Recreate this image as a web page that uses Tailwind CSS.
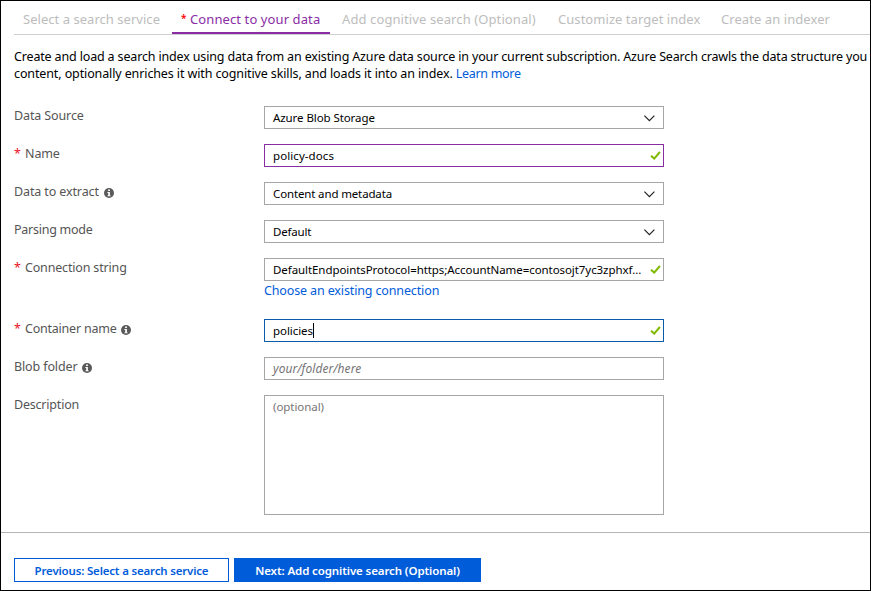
<!DOCTYPE html>
<html lang="en">
<head>
<meta charset="utf-8">
<title>Import data</title>
<script src="https://cdn.jsdelivr.net/npm/@tailwindcss/browser@4"></script>
</head>
<body class="bg-white font-['Noto_Sans','Open_Sans',sans-serif]">
<svg class="hidden">
  <symbol id="chevron" viewBox="0 0 12 8"><path d="M1.4 1.6 6.4 6.6 11.4 1.6" fill="none" stroke="#222" stroke-width="1.2"/></symbol>
  <symbol id="check" viewBox="0 0 11 9"><path d="M1 4.7 4.2 7.6 9.9 1" fill="none" stroke="#7fba00" stroke-width="2"/></symbol>
  <symbol id="info" viewBox="0 0 10 10"><circle cx="5" cy="5" r="5" fill="#5a5a5a"/><path d="M4.1 1.6h1.8v1.5H4.1zM3.4 4h2.5v3.4h.8v.9H3.4v-.9h.8V4.9h-.8z" fill="#fff"/></symbol>
</svg>
<div class="flex h-[591px] w-[871px] flex-col overflow-hidden border border-black">
  <nav class="ml-[13px] flex h-[34px] shrink-0 whitespace-nowrap border-b border-[#cfcfcf] pt-[9px] text-[13px] leading-[18px] text-[#bdbdbd]">
    <div class="w-[158px] pl-[9px] tracking-[0.034px]">Select a search service</div>
    <div class="flex h-[24px] w-[158px] border-b-2 border-[#8a2da5] pl-[9px] text-[#8a2da5]"><span class="w-[9px] text-[10px] leading-[16px] font-semibold text-[#f00]">*</span><span class="tracking-[0.1px]">Connect to your data</span></div>
    <div class="w-[216px] pl-[12px] tracking-[0.1px]">Add cognitive search (Optional)</div>
    <div class="w-[164px] pl-[12px] tracking-[0.05px]">Customize target index</div>
    <div class="pl-[11px] tracking-[0.068px]">Create an indexer</div>
  </nav>

  <p class="mt-[13px] ml-[13px] shrink-0 whitespace-nowrap text-[12.5px] leading-[17px] text-black"><span class="tracking-[-0.155px]">Create and load a search index using data from an existing Azure data source in your current subscription. Azure Search crawls the data structure you</span><br><span class="tracking-[-0.118px]">content, optionally enriches it with cognitive skills, and loads it into an index. </span><a class="tracking-[-0.31px] text-[#015cda]">Learn more</a></p>

  <form class="mt-[24px] ml-[13px] flex w-[650px] shrink-0 flex-col whitespace-nowrap text-[11.5px] leading-[22px] text-black">
    <div class="flex h-[38px] items-start">
      <label class="w-[250px] pt-px text-[12.5px] leading-[18px] tracking-[-0.12px] text-[#555]">Data Source</label>
      <div class="flex h-[23px] w-[400px] items-center justify-between border border-[#a6a6a6] pr-[8px] pl-[8px]"><span class="tracking-[-0.08px]">Azure Blob Storage</span><svg class="mt-px h-[8px] w-[12px]"><use href="#chevron"/></svg></div>
    </div>
    <div class="flex h-[38px] items-start">
      <label class="flex w-[250px] pt-px text-[12.5px] leading-[18px] tracking-[-0.12px] text-[#555]"><span class="w-[11px] text-[#e81123]">*</span>Name</label>
      <div class="flex h-[23px] w-[400px] items-center justify-between border border-[#8a2da5] pr-[2px] pl-[8px]"><span class="tracking-[0.08px]">policy-docs</span><svg class="h-[9px] w-[11px]"><use href="#check"/></svg></div>
    </div>
    <div class="flex h-[38px] items-start">
      <label class="flex w-[250px] items-center gap-[5px] pt-px text-[12.5px] leading-[18px] tracking-[-0.12px] text-[#555]">Data to extract<svg class="mt-px h-[10px] w-[10px]"><use href="#info"/></svg></label>
      <div class="flex h-[23px] w-[400px] items-center justify-between border border-[#a6a6a6] pr-[8px] pl-[8px]"><span class="tracking-[-0.14px]">Content and metadata</span><svg class="mt-px h-[8px] w-[12px]"><use href="#chevron"/></svg></div>
    </div>
    <div class="flex h-[38px] items-start">
      <label class="w-[250px] pt-px text-[12.5px] leading-[18px] tracking-[-0.25px] text-[#555]">Parsing mode</label>
      <div class="flex h-[23px] w-[400px] items-center justify-between border border-[#a6a6a6] pr-[8px] pl-[8px]"><span class="tracking-[-0.18px]">Default</span><svg class="mt-px h-[8px] w-[12px]"><use href="#chevron"/></svg></div>
    </div>
    <div class="flex h-[61px] items-start">
      <label class="flex w-[250px] pt-px text-[12.5px] leading-[18px] tracking-[-0.17px] text-[#555]"><span class="w-[11px] text-[#e81123]">*</span>Connection string</label>
      <div class="w-[400px]">
        <div class="flex h-[23px] items-center justify-between border border-[#a6a6a6] pr-[2px] pl-[8px]"><span class="tracking-[-0.07px]">DefaultEndpointsProtocol=https;AccountName=contosojt7yc3zphxf...</span><svg class="h-[9px] w-[11px]"><use href="#check"/></svg></div>
        <a class="block pt-px text-[12.5px] leading-[18px] tracking-[-0.135px] text-[#015cda]">Choose an existing connection</a>
      </div>
    </div>
    <div class="flex h-[38px] items-start">
      <label class="flex w-[250px] items-center pt-px text-[12.5px] leading-[18px] tracking-[-0.22px] text-[#555]"><span class="w-[11px] text-[#e81123]">*</span>Container name<svg class="mt-px ml-[4px] h-[10px] w-[10px]"><use href="#info"/></svg></label>
      <div class="flex h-[23px] w-[400px] items-center justify-between border border-[#0a5ca8] pr-[2px] pl-[8px]"><span class="flex items-center"><span class="tracking-[-0.06px]">policies</span><span class="h-[15px] w-px bg-black"></span></span><svg class="h-[9px] w-[11px]"><use href="#check"/></svg></div>
    </div>
    <div class="flex h-[38px] items-start">
      <label class="flex w-[250px] items-center pt-px text-[12.5px] leading-[18px] tracking-[-0.12px] text-[#555]">Blob folder<svg class="mt-px ml-[4px] h-[10px] w-[10px]"><use href="#info"/></svg></label>
      <div class="flex h-[23px] w-[400px] items-center border border-[#a6a6a6] pl-[8px] text-[12px] tracking-[0.05px] text-[#757575] italic">your/folder/here</div>
    </div>
    <div class="flex h-[120px] items-start">
      <label class="w-[250px] pt-px text-[12.5px] leading-[18px] tracking-[-0.2px] text-[#555]">Description</label>
      <div class="h-[120px] w-[400px] border border-[#a6a6a6] pl-[8px] tracking-[-0.06px] text-[#757575]">(optional)</div>
    </div>
  </form>

  <footer class="mt-[17px] flex shrink-0 gap-[5px] border-t border-[#b5b5b5] pt-[25px] pl-[13px] text-[11.5px] leading-[22px] font-semibold whitespace-nowrap">
    <button class="h-[24px] w-[215px] border border-[#015cda] pt-px tracking-[-0.18px] text-[#015cda]">Previous: Select a search service</button>
    <button class="h-[24px] w-[247px] border border-[#015cda] bg-[#015cda] pt-px tracking-[-0.11px] text-white">Next: Add cognitive search (Optional)</button>
  </footer>
</div>
</body>
</html>
